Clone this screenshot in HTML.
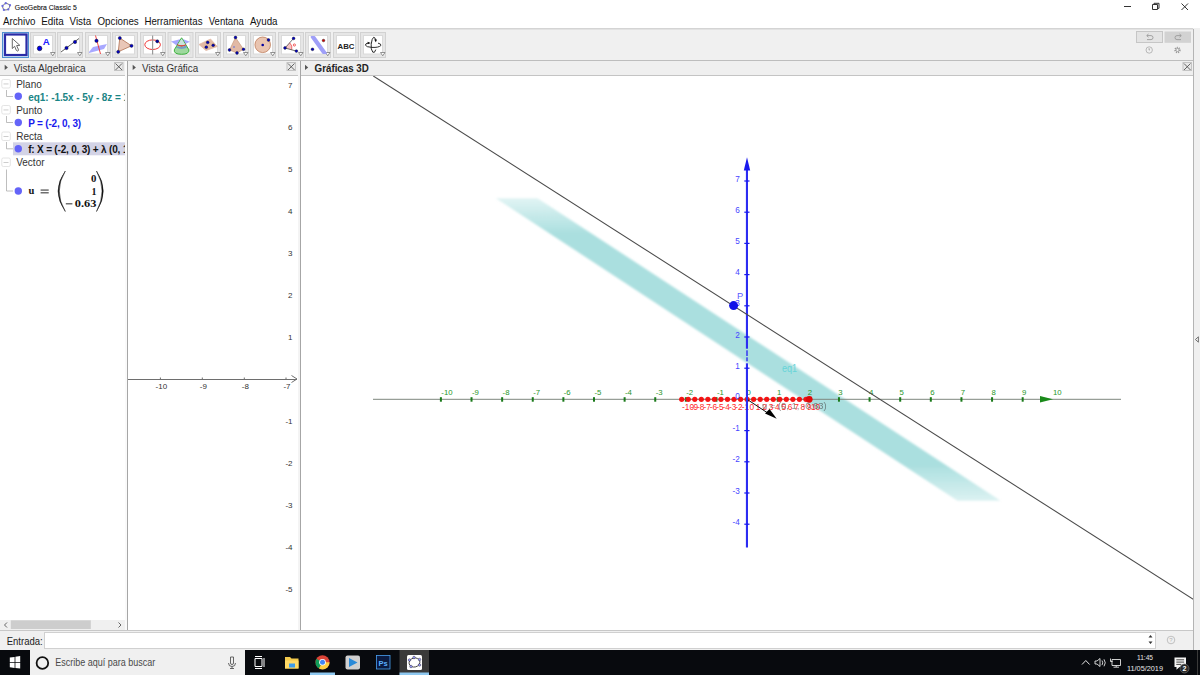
<!DOCTYPE html><html><head><meta charset="utf-8"><style>
html,body{margin:0;padding:0;width:1200px;height:675px;overflow:hidden;background:#fff;}
svg{display:block}
</style></head><body><svg width="1200" height="675" viewBox="0 0 1200 675">
<rect x="0" y="0" width="1200" height="28" fill="#ffffff" /><rect x="0" y="28" width="1200" height="33" fill="#f0f0f0" /><rect x="0" y="28" width="1200" height="1.5" fill="#d4d4d4" /><rect x="0" y="60" width="1193" height="1" fill="#bdbdbd" /><rect x="1193" y="28" width="7" height="622" fill="#f0f0f0" /><rect x="1193" y="29" width="1" height="621" fill="#b4b4b4" /><path d="M1198.4 336.8 L1195.4 339.5 L1198.4 342.2 Z" fill="none" stroke="#666" stroke-width="0.9"/><rect x="0" y="61" width="1193" height="14" fill="#efefef" /><rect x="0" y="75" width="125" height="1" fill="#c4c4c4" /><rect x="128" y="75" width="170" height="1" fill="#c4c4c4" /><rect x="301" y="75" width="892" height="1" fill="#c4c4c4" /><rect x="0" y="76" width="125" height="554" fill="#ffffff" /><rect x="125" y="61" width="2" height="569" fill="#fafafa" /><rect x="127" y="61" width="1" height="569" fill="#a6a6a6" /><rect x="128" y="76" width="1" height="554" fill="#f6f6f6" /><rect x="128" y="76" width="170" height="554" fill="#ffffff" /><rect x="298" y="61" width="2" height="569" fill="#f4f4f4" /><rect x="300" y="61" width="1" height="569" fill="#a6a6a6" /><rect x="301" y="76" width="1" height="554" fill="#f6f6f6" /><rect x="301" y="76" width="892" height="554" fill="#ffffff" /><rect x="0" y="630" width="1193" height="1" fill="#c8c8c8" /><rect x="0" y="631" width="1193" height="19" fill="#f0f0f0" /><rect x="44.5" y="632.5" width="1111" height="16" fill="#ffffff" stroke="#d0d0d0" stroke-width="1"/><rect x="0" y="650" width="1200" height="25" fill="#080a0e" /><path d="M5.75 3.25 Q8.2 3.6 10 5.25 Q9.6 7.6 8.25 9.4 Q6 10.2 3.9 9.9 Q2.6 8 2.5 6 Q3.8 4 5.75 3.25Z" fill="none" stroke="#666" stroke-width="0.9"/><circle cx="5.75" cy="3.25" r="1.15" fill="#6b6be0"/><circle cx="10" cy="5.25" r="1.15" fill="#6b6be0"/><circle cx="8.25" cy="9.4" r="1.15" fill="#6b6be0"/><circle cx="3.9" cy="9.9" r="1.15" fill="#6b6be0"/><circle cx="2.5" cy="6" r="1.15" fill="#6b6be0"/><text x="14.8" y="9.8" font-family='"Liberation Sans", sans-serif' font-size="8.1" fill="#111" font-weight="normal" text-anchor="start" textLength="62" lengthAdjust="spacingAndGlyphs" stroke="#111" stroke-width="0.12">GeoGebra Classic 5</text><rect x="1124" y="6" width="7" height="1" fill="#333" /><path d="M1152.5 4.5h5v5h-5z M1154 4.5v-1.2h5v5h-1.5" fill="none" stroke="#333" stroke-width="1"/><path d="M1181.5 3.5l6.5 6.5 M1188 3.5l-6.5 6.5" stroke="#333" stroke-width="1"/><text x="3" y="25.2" font-family='"Liberation Sans", sans-serif' font-size="10.5" fill="#111" font-weight="normal" text-anchor="start" textLength="32.5" lengthAdjust="spacingAndGlyphs" >Archivo</text><text x="41.25" y="25.2" font-family='"Liberation Sans", sans-serif' font-size="10.5" fill="#111" font-weight="normal" text-anchor="start" textLength="22.5" lengthAdjust="spacingAndGlyphs" >Edita</text><text x="69.5" y="25.2" font-family='"Liberation Sans", sans-serif' font-size="10.5" fill="#111" font-weight="normal" text-anchor="start" textLength="21.75" lengthAdjust="spacingAndGlyphs" >Vista</text><text x="97.5" y="25.2" font-family='"Liberation Sans", sans-serif' font-size="10.5" fill="#111" font-weight="normal" text-anchor="start" textLength="41.25" lengthAdjust="spacingAndGlyphs" >Opciones</text><text x="144.5" y="25.2" font-family='"Liberation Sans", sans-serif' font-size="10.5" fill="#111" font-weight="normal" text-anchor="start" textLength="58" lengthAdjust="spacingAndGlyphs" >Herramientas</text><text x="208.75" y="25.2" font-family='"Liberation Sans", sans-serif' font-size="10.5" fill="#111" font-weight="normal" text-anchor="start" textLength="35" lengthAdjust="spacingAndGlyphs" >Ventana</text><text x="250" y="25.2" font-family='"Liberation Sans", sans-serif' font-size="10.5" fill="#111" font-weight="normal" text-anchor="start" textLength="27.5" lengthAdjust="spacingAndGlyphs" >Ayuda</text><rect x="2.5" y="32.5" width="26" height="25" fill="#c9e1f7" stroke="#4f8fcf" stroke-width="1"/><rect x="5" y="34.5" width="21.5" height="20.5" fill="#ffffff" stroke="#2b2ba6" stroke-width="2.2"/><path d="M12.3 38.5 L12.3 48.5 L14.6 46.3 L16.3 50.3 Q17.3 51.6 18.2 50.8 Q18.8 50 18.2 49 L16.6 45.6 L19.8 45.3 Z" fill="#fff" stroke="#444" stroke-width="0.8" stroke-linejoin="round"/><rect x="30.5" y="32.5" width="25" height="25" fill="#e6e6e6" stroke="#d2d2d2" stroke-width="1"/><rect x="33.5" y="35.5" width="19" height="18.5" fill="#ffffff" stroke="#dadada" stroke-width="1"/><path d="M50.5 52.5h4.5l-2.25 3.3z" fill="#fff" stroke="#777" stroke-width="0.8"/><circle cx="39.6" cy="48.4" r="2.3" fill="#0000f0" stroke="#111" stroke-width="0.6"/><text x="42.8" y="44.9" font-family='"Liberation Sans", sans-serif' font-size="9.8" fill="#2020ff" font-weight="bold" text-anchor="start" textLength="7" lengthAdjust="spacingAndGlyphs" >A</text><rect x="57.5" y="32.5" width="25" height="25" fill="#e6e6e6" stroke="#d2d2d2" stroke-width="1"/><rect x="60.5" y="35.5" width="19" height="18.5" fill="#ffffff" stroke="#dadada" stroke-width="1"/><path d="M77.5 52.5h4.5l-2.25 3.3z" fill="#fff" stroke="#777" stroke-width="0.8"/><line x1="61" y1="52" x2="79" y2="38.5" stroke="#333" stroke-width="0.8" /><circle cx="66.5" cy="48" r="1.7" fill="#0000c0" stroke="#111" stroke-width="0.4"/><circle cx="75" cy="42" r="1.7" fill="#0000c0" stroke="#111" stroke-width="0.4"/><rect x="85.5" y="32.5" width="25" height="25" fill="#e6e6e6" stroke="#d2d2d2" stroke-width="1"/><rect x="88.5" y="35.5" width="19" height="18.5" fill="#ffffff" stroke="#dadada" stroke-width="1"/><path d="M105.5 52.5h4.5l-2.25 3.3z" fill="#fff" stroke="#777" stroke-width="0.8"/><path d="M89 52 L93 47 L107 44 L104 49 L89 53 Z" fill="#9999ff" opacity="0.85"/><line x1="95.5" y1="35.5" x2="100.5" y2="54" stroke="#ee3333" stroke-width="0.9" /><circle cx="96.5" cy="40.8" r="1.7" fill="#0000c0" stroke="#111" stroke-width="0.4"/><rect x="112.5" y="32.5" width="25" height="25" fill="#e6e6e6" stroke="#d2d2d2" stroke-width="1"/><rect x="115.5" y="35.5" width="19" height="18.5" fill="#ffffff" stroke="#dadada" stroke-width="1"/><path d="M119.8 38 L131.5 45.8 L118.2 51.8 Z" fill="#e9c7b8" stroke="#b07050" stroke-width="0.8"/><circle cx="119.8" cy="38" r="1.6" fill="#0000c0" stroke="#111" stroke-width="0.4"/><circle cx="131.5" cy="45.8" r="1.6" fill="#0000c0" stroke="#111" stroke-width="0.4"/><circle cx="118.2" cy="51.8" r="1.6" fill="#0000c0" stroke="#111" stroke-width="0.4"/><rect x="140.5" y="32.5" width="25" height="25" fill="#e6e6e6" stroke="#d2d2d2" stroke-width="1"/><rect x="143.5" y="35.5" width="19" height="18.5" fill="#ffffff" stroke="#dadada" stroke-width="1"/><path d="M160.5 52.5h4.5l-2.25 3.3z" fill="#fff" stroke="#777" stroke-width="0.8"/><ellipse cx="152.6" cy="44.7" rx="7.8" ry="4.8" fill="none" stroke="#ee2222" stroke-width="0.9"/><rect x="152" y="35.5" width="1.2" height="19" fill="#999" /><circle cx="157.3" cy="41.3" r="1.6" fill="#0000a0" stroke="#111" stroke-width="0.4"/><rect x="168.0" y="32.5" width="25" height="25" fill="#e6e6e6" stroke="#d2d2d2" stroke-width="1"/><rect x="171.0" y="35.5" width="19" height="18.5" fill="#ffffff" stroke="#dadada" stroke-width="1"/><path d="M171 41.5 L182 38.8 L190 41.8 L179 47 Z" fill="#8a8aff" opacity="0.75"/><path d="M181.6 37.8 L174.3 49.8 Q173.6 54.3 181.6 54.3 Q189.4 54.3 188.9 49.8 Z" fill="#9ed89e" stroke="#2eaa2e" stroke-width="0.9" stroke-linejoin="round"/><path d="M181.6 38.6 L177.5 45 Q181.6 47 185.7 45 Z" fill="#c8e4dc"/><path d="M175.8 47.5 L178 46.2 Q182 47.8 185.5 45.6 L187.4 47.2 Q182 50.5 175.8 47.5Z" fill="#5a78e0" opacity="0.6"/><path d="M177.2 44.6 Q181.6 47.2 185.9 44.6" fill="none" stroke="#e02020" stroke-width="1.1"/><rect x="195.5" y="32.5" width="25" height="25" fill="#e6e6e6" stroke="#d2d2d2" stroke-width="1"/><rect x="198.5" y="35.5" width="19" height="18.5" fill="#ffffff" stroke="#dadada" stroke-width="1"/><path d="M215.5 52.5h4.5l-2.25 3.3z" fill="#fff" stroke="#777" stroke-width="0.8"/><path d="M199 44.5 L210.5 39 L217.3 46.5 L206 50.5 Z" fill="#e2b9a5" stroke="#e2b9a5" stroke-width="0.8" stroke-linejoin="round"/><circle cx="207.7" cy="42.4" r="1.4" fill="#0000c0" stroke="#111" stroke-width="0.4"/><circle cx="206.3" cy="47.2" r="1.4" fill="#0000c0" stroke="#111" stroke-width="0.4"/><circle cx="213.2" cy="45.3" r="1.4" fill="#0000c0" stroke="#111" stroke-width="0.4"/><rect x="223.5" y="32.5" width="25" height="25" fill="#e6e6e6" stroke="#d2d2d2" stroke-width="1"/><rect x="226.5" y="35.5" width="19" height="18.5" fill="#ffffff" stroke="#dadada" stroke-width="1"/><path d="M243.5 52.5h4.5l-2.25 3.3z" fill="#fff" stroke="#777" stroke-width="0.8"/><path d="M235.5 37.5 L229.5 50 L237 53 L243.5 49.3 Z" fill="#e2b9a5" stroke="#c09070" stroke-width="0.6"/><circle cx="235.5" cy="37.5" r="1.4" fill="#0000c0" stroke="#111" stroke-width="0.4"/><circle cx="229.5" cy="50" r="1.4" fill="#0000c0" stroke="#111" stroke-width="0.4"/><circle cx="237" cy="53" r="1.4" fill="#0000c0" stroke="#111" stroke-width="0.4"/><circle cx="243.5" cy="49.3" r="1.4" fill="#0000c0" stroke="#111" stroke-width="0.4"/><circle cx="234" cy="47" r="1" fill="#8888cc"/><rect x="250.5" y="32.5" width="25" height="25" fill="#e6e6e6" stroke="#d2d2d2" stroke-width="1"/><rect x="253.5" y="35.5" width="19" height="18.5" fill="#ffffff" stroke="#dadada" stroke-width="1"/><path d="M270.5 52.5h4.5l-2.25 3.3z" fill="#fff" stroke="#777" stroke-width="0.8"/><circle cx="262.7" cy="44.8" r="7.8" fill="#e9c4b0" stroke="#b8704a" stroke-width="0.7"/><circle cx="262.7" cy="45" r="1.3" fill="#0000a0"/><circle cx="268.5" cy="40" r="1.4" fill="#0000c0" stroke="#111" stroke-width="0.4"/><rect x="278.5" y="32.5" width="25" height="25" fill="#e6e6e6" stroke="#d2d2d2" stroke-width="1"/><rect x="281.5" y="35.5" width="19" height="18.5" fill="#ffffff" stroke="#dadada" stroke-width="1"/><path d="M298.5 52.5h4.5l-2.25 3.3z" fill="#fff" stroke="#777" stroke-width="0.8"/><path d="M285 48 L289.7 42.8 A7 7 0 0 1 291.75 49.8 Z" fill="#f8c4c4"/><path d="M289.7 42.8 A7 7 0 0 1 291.75 49.8" fill="none" stroke="#ee4444" stroke-width="0.7"/><line x1="285" y1="48" x2="293.6" y2="38.4" stroke="#333" stroke-width="0.7" /><line x1="285" y1="48" x2="296.4" y2="51.1" stroke="#333" stroke-width="0.7" /><circle cx="294.4" cy="45" r="1.1" fill="none" stroke="#ee2222" stroke-width="0.7"/><circle cx="285" cy="48" r="1.4" fill="#0000c0" stroke="#111" stroke-width="0.4"/><circle cx="293.6" cy="38.4" r="1.4" fill="#0000c0" stroke="#111" stroke-width="0.4"/><circle cx="296.4" cy="51.1" r="1.4" fill="#0000c0" stroke="#111" stroke-width="0.4"/><rect x="305.5" y="32.5" width="25" height="25" fill="#e6e6e6" stroke="#d2d2d2" stroke-width="1"/><rect x="308.5" y="35.5" width="19" height="18.5" fill="#ffffff" stroke="#dadada" stroke-width="1"/><path d="M325.5 52.5h4.5l-2.25 3.3z" fill="#fff" stroke="#777" stroke-width="0.8"/><path d="M311.5 37 L314.5 37 L326 53 L323 53 Z" fill="#9f9ff8" stroke="#9f9ff8" stroke-width="1.8" stroke-linejoin="round"/><circle cx="323.5" cy="40.5" r="1.3" fill="#cc0000" stroke="#111" stroke-width="0.4"/><circle cx="312.5" cy="49.3" r="1.4" fill="#0000c0" stroke="#111" stroke-width="0.4"/><rect x="333.5" y="32.5" width="25" height="25" fill="#e6e6e6" stroke="#d2d2d2" stroke-width="1"/><rect x="336.5" y="35.5" width="19" height="18.5" fill="#ffffff" stroke="#dadada" stroke-width="1"/><text x="346" y="48.5" font-family='"Liberation Sans", sans-serif' font-size="7.8" fill="#222" font-weight="bold" text-anchor="middle" >ABC</text><rect x="360.5" y="32.5" width="25" height="25" fill="#e6e6e6" stroke="#d2d2d2" stroke-width="1"/><rect x="363.5" y="35.5" width="19" height="18.5" fill="#ffffff" stroke="#dadada" stroke-width="1"/><path d="M380.5 52.5h4.5l-2.25 3.3z" fill="#fff" stroke="#777" stroke-width="0.8"/><path d="M375.8 49.6 Q374.6 53.6 372.8 52.2 Q370.6 49.5 371.2 44.2 Q371.9 38.3 373.6 37.3 Q375.2 37 375.6 40.2" fill="none" stroke="#222" stroke-width="0.95"/><path d="M374.2 39.6 L377 39.6 L375.8 42.3Z" fill="#111"/><path d="M378 43.1 Q381.6 43.9 380.8 45.6 Q378.6 47.7 372 47.4 Q366.2 47.1 365.4 45.2 Q365 43.6 368.6 42.9" fill="none" stroke="#222" stroke-width="0.95"/><path d="M367.6 41.7 L370.8 42.9 L367.8 44.3Z" fill="#111"/><rect x="1136.5" y="31.5" width="26" height="11" fill="#e4e4e4" stroke="#c6c6c6" stroke-width="1"/><rect x="1164.5" y="31.5" width="26.5" height="11.3" fill="#d2d2d2" /><path d="M1147 35.6 h4 a2 2 0 0 1 0 4 h-4 M1148.5 34 l-1.8 1.6 l1.8 1.6" fill="none" stroke="#9a9a9a" stroke-width="0.9"/><path d="M1181 35.6 h-4 a2 2 0 0 0 0 4 h4 M1179.5 34 l1.8 1.6 l-1.8 1.6" fill="none" stroke="#9a9a9a" stroke-width="0.9"/><circle cx="1149.2" cy="50" r="3.2" fill="none" stroke="#aaa" stroke-width="0.8"/><path d="M1148.2 48.5 h2 l-1 2.4z" fill="#aaa"/><circle cx="1177.5" cy="50" r="2.4" fill="none" stroke="#999" stroke-width="1.6" stroke-dasharray="1 0.9"/><circle cx="1177.5" cy="50" r="1.6" fill="none" stroke="#999" stroke-width="0.8"/><path d="M4.7 64.8 L7.9 67.39999999999999 L4.7 70.0 Z" fill="#555"/><text x="13.7" y="72" font-family='"Liberation Sans", sans-serif' font-size="10" fill="#333" font-weight="normal" text-anchor="start" textLength="72" lengthAdjust="spacingAndGlyphs" >Vista Algebraica</text><rect x="114.5" y="62.5" width="8.5" height="8" fill="#e8e8e8" stroke="#c4c4c4" stroke-width="1"/><path d="M115.5 63.5 L122 70 M122 63.5 L115.5 70" stroke="#555" stroke-width="0.9"/><path d="M132.7 64.8 L135.89999999999998 67.39999999999999 L132.7 70.0 Z" fill="#555"/><text x="142" y="72" font-family='"Liberation Sans", sans-serif' font-size="10" fill="#333" font-weight="normal" text-anchor="start" textLength="56.2" lengthAdjust="spacingAndGlyphs" >Vista Gráfica</text><rect x="287.0" y="62.5" width="8.5" height="8" fill="#e8e8e8" stroke="#c4c4c4" stroke-width="1"/><path d="M288.0 63.5 L294.5 70 M294.5 63.5 L288.0 70" stroke="#555" stroke-width="0.9"/><path d="M305 64.8 L308.2 67.39999999999999 L305 70.0 Z" fill="#555"/><text x="314.6" y="72" font-family='"Liberation Sans", sans-serif' font-size="10" fill="#222" font-weight="bold" text-anchor="start" textLength="54.2" lengthAdjust="spacingAndGlyphs" >Gráficas 3D</text><rect x="1183.0" y="62.5" width="8.5" height="8" fill="#e8e8e8" stroke="#c4c4c4" stroke-width="1"/><path d="M1184.0 63.5 L1190.5 70 M1190.5 63.5 L1184.0 70" stroke="#555" stroke-width="0.9"/><rect x="13" y="142.3" width="112" height="13" fill="#d3d3e6" /><rect x="1.8" y="79.5" width="8.5" height="8.5" fill="#ffffff" rx="1.5" stroke="#e4e4e4" stroke-width="1"/><rect x="3.5" y="83.5" width="5" height="0.9" fill="#c8c8c8" /><text x="16.2" y="87.5" font-family='"Liberation Sans", sans-serif' font-size="10" fill="#333" font-weight="normal" text-anchor="start" >Plano</text><rect x="1.8" y="105.5" width="8.5" height="8.5" fill="#ffffff" rx="1.5" stroke="#e4e4e4" stroke-width="1"/><rect x="3.5" y="109.5" width="5" height="0.9" fill="#c8c8c8" /><text x="16.2" y="113.5" font-family='"Liberation Sans", sans-serif' font-size="10" fill="#333" font-weight="normal" text-anchor="start" >Punto</text><rect x="1.8" y="132.0" width="8.5" height="8.5" fill="#ffffff" rx="1.5" stroke="#e4e4e4" stroke-width="1"/><rect x="3.5" y="136.0" width="5" height="0.9" fill="#c8c8c8" /><text x="16.2" y="140.0" font-family='"Liberation Sans", sans-serif' font-size="10" fill="#333" font-weight="normal" text-anchor="start" >Recta</text><rect x="1.8" y="158.0" width="8.5" height="8.5" fill="#ffffff" rx="1.5" stroke="#e4e4e4" stroke-width="1"/><rect x="3.5" y="162.0" width="5" height="0.9" fill="#c8c8c8" /><text x="16.2" y="166.0" font-family='"Liberation Sans", sans-serif' font-size="10" fill="#333" font-weight="normal" text-anchor="start" >Vector</text><path d="M6.5 90 V96.5 H13" fill="none" stroke="#a8a8a8" stroke-width="0.75"/><circle cx="18.3" cy="96.2" r="3.7" fill="#6464f8"/><svg x="0" y="76" width="125" height="554" overflow="hidden"><text x="28.2" y="24.5" font-family='"Liberation Sans", sans-serif' font-size="10" fill="#1a8585" font-weight="bold" text-anchor="start" textLength="92.6" lengthAdjust="spacing" >eq1: -1.5x - 5y - 8z =</text><text x="123.5" y="24.5" font-family='"Liberation Sans", sans-serif' font-size="10" fill="#1a8080" font-weight="bold" text-anchor="start" >1</text><text x="28.2" y="76.6" font-family='"Liberation Sans", sans-serif' font-size="10" fill="#111" font-weight="bold" text-anchor="start" textLength="92.1" lengthAdjust="spacing" >f: X = (-2, 0, 3) + λ (0,</text><text x="123" y="76.6" font-family='"Liberation Sans", sans-serif' font-size="10" fill="#111" font-weight="bold" text-anchor="start" >1</text></svg><path d="M6.5 116 V122.5 H13" fill="none" stroke="#a8a8a8" stroke-width="0.75"/><circle cx="18.3" cy="122.5" r="3.7" fill="#6464f8"/><text x="28.2" y="126.5" font-family='"Liberation Sans", sans-serif' font-size="10" fill="#1a1aee" font-weight="bold" text-anchor="start" textLength="53" lengthAdjust="spacing" >P = (-2, 0, 3)</text><path d="M6.5 142 V148.8 H13" fill="none" stroke="#a8a8a8" stroke-width="0.75"/><circle cx="18.3" cy="148.8" r="3.7" fill="#6464f8"/><path d="M6.5 169.5 V191 H13" fill="none" stroke="#a8a8a8" stroke-width="0.75"/><circle cx="18.3" cy="191" r="3.7" fill="#6464f8"/><text x="28.5" y="194.3" font-family='"Liberation Serif", serif' font-size="10.5" fill="#111" font-weight="bold" text-anchor="start" >u</text><rect x="40.6" y="189.6" width="8.1" height="0.9" fill="#111" /><rect x="40.6" y="192.4" width="8.1" height="0.9" fill="#111" /><path d="M65.3 171 Q50.8 191 65.3 211.5 Q53.2 191 65.3 171Z" fill="#111" stroke="#111" stroke-width="0.5"/><path d="M96.5 171 Q110 191 96.5 211.5 Q107.6 191 96.5 171Z" fill="#111" stroke="#111" stroke-width="0.5"/><text x="96.4" y="181.9" font-family='"Liberation Serif", serif' font-size="10" fill="#111" font-weight="bold" text-anchor="end" textLength="5.4" lengthAdjust="spacingAndGlyphs" >0</text><text x="96.4" y="194.9" font-family='"Liberation Serif", serif' font-size="10" fill="#111" font-weight="bold" text-anchor="end" textLength="5" lengthAdjust="spacingAndGlyphs" >1</text><rect x="65.8" y="203.4" width="6.6" height="0.9" fill="#111" /><text x="74.8" y="207.3" font-family='"Liberation Serif", serif' font-size="10" fill="#111" font-weight="bold" text-anchor="start" textLength="21.6" lengthAdjust="spacingAndGlyphs" >0.63</text><rect x="0" y="620" width="125" height="10" fill="#f0f0f0" /><rect x="10.8" y="620.3" width="80" height="8.7" fill="#cdcdcd" /><path d="M7 622.5 L4.5 625 L7 627.5 M118.5 622.5 L121 625 L118.5 627.5" fill="none" stroke="#555" stroke-width="0.9"/><line x1="128" y1="379" x2="297" y2="379" stroke="#6e6e6e" stroke-width="1" shape-rendering="crispEdges"/><path d="M291.5 375.5 L297 379 L291.5 382.5" fill="none" stroke="#6e6e6e" stroke-width="1"/><line x1="160.4" y1="377.5" x2="160.4" y2="379" stroke="#6e6e6e" stroke-width="1" /><text x="161.4" y="389" font-family='"Liberation Sans", sans-serif' font-size="8" fill="#333" font-weight="normal" text-anchor="middle" >-10</text><line x1="202.3" y1="377.5" x2="202.3" y2="379" stroke="#6e6e6e" stroke-width="1" /><text x="203.3" y="389" font-family='"Liberation Sans", sans-serif' font-size="8" fill="#333" font-weight="normal" text-anchor="middle" >-9</text><line x1="244.3" y1="377.5" x2="244.3" y2="379" stroke="#6e6e6e" stroke-width="1" /><text x="245.3" y="389" font-family='"Liberation Sans", sans-serif' font-size="8" fill="#333" font-weight="normal" text-anchor="middle" >-8</text><line x1="286.0" y1="377.5" x2="286.0" y2="379" stroke="#6e6e6e" stroke-width="1" /><text x="287.0" y="389" font-family='"Liberation Sans", sans-serif' font-size="8" fill="#333" font-weight="normal" text-anchor="middle" >-7</text><text x="292.5" y="88" font-family='"Liberation Sans", sans-serif' font-size="8" fill="#333" font-weight="normal" text-anchor="end" >7</text><text x="292.5" y="130" font-family='"Liberation Sans", sans-serif' font-size="8" fill="#333" font-weight="normal" text-anchor="end" >6</text><text x="292.5" y="172" font-family='"Liberation Sans", sans-serif' font-size="8" fill="#333" font-weight="normal" text-anchor="end" >5</text><text x="292.5" y="214" font-family='"Liberation Sans", sans-serif' font-size="8" fill="#333" font-weight="normal" text-anchor="end" >4</text><text x="292.5" y="256" font-family='"Liberation Sans", sans-serif' font-size="8" fill="#333" font-weight="normal" text-anchor="end" >3</text><text x="292.5" y="298" font-family='"Liberation Sans", sans-serif' font-size="8" fill="#333" font-weight="normal" text-anchor="end" >2</text><text x="292.5" y="340" font-family='"Liberation Sans", sans-serif' font-size="8" fill="#333" font-weight="normal" text-anchor="end" >1</text><text x="292.5" y="424" font-family='"Liberation Sans", sans-serif' font-size="8" fill="#333" font-weight="normal" text-anchor="end" >-1</text><text x="292.5" y="466" font-family='"Liberation Sans", sans-serif' font-size="8" fill="#333" font-weight="normal" text-anchor="end" >-2</text><text x="292.5" y="508" font-family='"Liberation Sans", sans-serif' font-size="8" fill="#333" font-weight="normal" text-anchor="end" >-3</text><text x="292.5" y="550" font-family='"Liberation Sans", sans-serif' font-size="8" fill="#333" font-weight="normal" text-anchor="end" >-4</text><text x="292.5" y="592" font-family='"Liberation Sans", sans-serif' font-size="8" fill="#333" font-weight="normal" text-anchor="end" >-5</text><text x="6.7" y="644.6" font-family='"Liberation Sans", sans-serif' font-size="10.8" fill="#222" font-weight="normal" text-anchor="start" textLength="36" lengthAdjust="spacingAndGlyphs" >Entrada:</text><path d="M1148.5 637.5 l2 -2.5 l2 2.5z M1148.5 641.5 l2 2.5 l2 -2.5z" fill="#333"/><circle cx="1171" cy="640" r="3.8" fill="none" stroke="#b4b4b4" stroke-width="0.8"/><text x="1171" y="642.3" font-family='"Liberation Sans"' font-size="6" fill="#b4b4b4" text-anchor="middle">?</text><rect x="30" y="650" width="215" height="25" fill="#f0f0f0" /><path d="M9.8 657.6 L14.6 656.9 V662 H9.8Z M15.4 656.8 L20.2 656 V662 H15.4Z M9.8 662.8 H14.6 V667.9 L9.8 667.2Z M15.4 662.8 H20.2 V668.6 L15.4 667.9Z" fill="#fff"/><circle cx="42.4" cy="663" r="5.8" fill="none" stroke="#111" stroke-width="1.8"/><text x="55.3" y="666.2" font-family='"Liberation Sans", sans-serif' font-size="10" fill="#4a4a4a" font-weight="normal" text-anchor="start" textLength="100" lengthAdjust="spacingAndGlyphs" >Escribe aquí para buscar</text><path d="M230.5 657 h3 v6 a1.5 1.5 0 0 1 -3 0 z M228.5 663 a3.5 3.5 0 0 0 7 0 M232 666.5 v2 M230 668.5 h4" fill="none" stroke="#555" stroke-width="0.9"/><path d="M255 658.5 h7 v8 h-7z M255 656.5 h7 M255 668.5 h7 M264 658 v9" fill="none" stroke="#fff" stroke-width="1"/><path d="M285 657 h5 l1.5 1.5 h7 v10 h-13.5z" fill="#f2c94c"/><rect x="285" y="660.5" width="13.5" height="8" fill="#ffd966"/><rect x="289" y="663.5" width="6" height="4" fill="#3d9be9"/><circle cx="322.5" cy="662.3" r="7" fill="#db4437"/><path d="M322.5 662.3 L316.4 658.8 A7 7 0 0 0 319 668.4Z" fill="#0f9d58"/><path d="M322.5 662.3 L319 668.4 A7 7 0 0 0 329.5 662.3 Z" fill="#ffcd40"/><circle cx="322.5" cy="662.3" r="3.3" fill="#fff"/><circle cx="322.5" cy="662.3" r="2.5" fill="#4285f4"/><rect x="310" y="672.5" width="25" height="2.5" fill="#8ec8f0" /><rect x="345.5" y="655.5" width="14.5" height="14" rx="2" fill="#d0d0d0"/><path d="M349 658 L357.5 662.5 L349 667 Z" fill="#2a8ad8"/><rect x="376.5" y="655.5" width="13.5" height="13.5" fill="#0a1a40" stroke="#4aa0f0" stroke-width="0.8"/><text x="383.2" y="665.5" font-family='"Liberation Sans", sans-serif' font-size="7.5" fill="#5ab0ff" font-weight="bold" text-anchor="middle" >Ps</text><rect x="399.5" y="650" width="29.5" height="25" fill="#3a3a3a" /><rect x="399.5" y="672.5" width="29.5" height="2.5" fill="#8ec8f0" /><rect x="407" y="655" width="15" height="15" rx="1.5" fill="#fff"/><ellipse cx="414.5" cy="662.5" rx="5.5" ry="4.5" fill="none" stroke="#444" stroke-width="0.9" transform="rotate(-15 414.5 662.5)"/><circle cx="409.5" cy="660" r="1.3" fill="#9999ff" stroke="#222" stroke-width="0.4"/><circle cx="414" cy="657.5" r="1.3" fill="#9999ff" stroke="#222" stroke-width="0.4"/><circle cx="419.5" cy="659.5" r="1.3" fill="#9999ff" stroke="#222" stroke-width="0.4"/><circle cx="419.5" cy="665" r="1.3" fill="#9999ff" stroke="#222" stroke-width="0.4"/><circle cx="411" cy="666.5" r="1.3" fill="#9999ff" stroke="#222" stroke-width="0.4"/><path d="M1082 664.5 l3.8 -4 l3.8 4" fill="none" stroke="#fff" stroke-width="0.9"/><path d="M1095 661 h2 l3 -2.5 v8 l-3 -2.5 h-2z M1102 660.5 q1.5 2.3 0 4.6 M1104 659.3 q2.5 3.5 0 7" fill="none" stroke="#fff" stroke-width="0.8"/><path d="M1112 659.5 h8.5 v6 h-8.5z M1116.2 665.5 v1.5 M1113.5 667.2 h5.5 M1110.5 658.5 v3 h2" fill="none" stroke="#fff" stroke-width="0.8"/><text x="1137" y="659.6" font-family='"Liberation Sans", sans-serif' font-size="7.6" fill="#e8e8e8" font-weight="normal" text-anchor="start" textLength="16" lengthAdjust="spacingAndGlyphs" >11:45</text><text x="1127" y="671.3" font-family='"Liberation Sans", sans-serif' font-size="7.6" fill="#e8e8e8" font-weight="normal" text-anchor="start" textLength="36" lengthAdjust="spacingAndGlyphs" >11/05/2019</text><path d="M1174.5 657.5 h11.5 v9.5 h-6.5 l-3 2.8 v-2.8 h-2z" fill="#f4f4f4"/><path d="M1176.3 659.8 h7.8 M1176.3 662.1 h7.8 M1176.3 664.4 h5" stroke="#333" stroke-width="0.9"/><rect x="1197" y="650" width="1" height="25" fill="#3a3a3a" /><circle cx="1184.5" cy="668.5" r="4.5" fill="#2a2a2a" stroke="#777" stroke-width="0.6"/><text x="1184.5" y="671.3" font-family='"Liberation Sans", sans-serif' font-size="7" fill="#fff" font-weight="bold" text-anchor="middle" >2</text><svg x="301" y="76" width="892" height="554" overflow="hidden"><g transform="translate(-301,-76)"><defs><linearGradient id="bg" x1="0" y1="198" x2="0" y2="500.5" gradientUnits="userSpaceOnUse"><stop offset="0" stop-color="#aadfdf" stop-opacity="0.35"/><stop offset="0.12" stop-color="#aadfdf" stop-opacity="1"/><stop offset="0.88" stop-color="#aadfdf" stop-opacity="1"/><stop offset="1" stop-color="#aadfdf" stop-opacity="0.42"/></linearGradient><filter id="blur" x="-5%" y="-5%" width="110%" height="110%"><feGaussianBlur stdDeviation="0.85"/></filter></defs><path d="M495.8 198.2 L537.5 198.2 L1000.5 500.8 L957.5 500.8 Z" fill="url(#bg)" filter="url(#blur)"/><line x1="373" y1="399.3" x2="1121" y2="399.3" stroke="#7e867e" stroke-width="1" /><rect x="439.90000000000003" y="397.2" width="2" height="4.5" fill="#1a7a1a"/><text x="441.3" y="395.4" font-family='"Liberation Sans", sans-serif' font-size="7.8" fill="#2a962a" font-weight="normal" text-anchor="start" >-10</text><rect x="470.52000000000004" y="397.2" width="2" height="4.5" fill="#1a7a1a"/><text x="471.92" y="395.4" font-family='"Liberation Sans", sans-serif' font-size="7.8" fill="#2a962a" font-weight="normal" text-anchor="start" >-9</text><rect x="501.14" y="397.2" width="2" height="4.5" fill="#1a7a1a"/><text x="502.53999999999996" y="395.4" font-family='"Liberation Sans", sans-serif' font-size="7.8" fill="#2a962a" font-weight="normal" text-anchor="start" >-8</text><rect x="531.76" y="397.2" width="2" height="4.5" fill="#1a7a1a"/><text x="533.16" y="395.4" font-family='"Liberation Sans", sans-serif' font-size="7.8" fill="#2a962a" font-weight="normal" text-anchor="start" >-7</text><rect x="562.38" y="397.2" width="2" height="4.5" fill="#1a7a1a"/><text x="563.78" y="395.4" font-family='"Liberation Sans", sans-serif' font-size="7.8" fill="#2a962a" font-weight="normal" text-anchor="start" >-6</text><rect x="593.0" y="397.2" width="2" height="4.5" fill="#1a7a1a"/><text x="594.4" y="395.4" font-family='"Liberation Sans", sans-serif' font-size="7.8" fill="#2a962a" font-weight="normal" text-anchor="start" >-5</text><rect x="623.62" y="397.2" width="2" height="4.5" fill="#1a7a1a"/><text x="625.02" y="395.4" font-family='"Liberation Sans", sans-serif' font-size="7.8" fill="#2a962a" font-weight="normal" text-anchor="start" >-4</text><rect x="654.24" y="397.2" width="2" height="4.5" fill="#1a7a1a"/><text x="655.64" y="395.4" font-family='"Liberation Sans", sans-serif' font-size="7.8" fill="#2a962a" font-weight="normal" text-anchor="start" >-3</text><rect x="684.86" y="397.2" width="2" height="4.5" fill="#1a7a1a"/><text x="686.26" y="395.4" font-family='"Liberation Sans", sans-serif' font-size="7.8" fill="#2a962a" font-weight="normal" text-anchor="start" >-2</text><rect x="715.48" y="397.2" width="2" height="4.5" fill="#1a7a1a"/><text x="716.88" y="395.4" font-family='"Liberation Sans", sans-serif' font-size="7.8" fill="#2a962a" font-weight="normal" text-anchor="start" >-1</text><rect x="746.1" y="397.2" width="2" height="4.5" fill="#1a7a1a"/><text x="746.5" y="395.4" font-family='"Liberation Sans", sans-serif' font-size="7.8" fill="#2a962a" font-weight="normal" text-anchor="start" >0</text><rect x="776.72" y="397.2" width="2" height="4.5" fill="#1a7a1a"/><text x="777.12" y="395.4" font-family='"Liberation Sans", sans-serif' font-size="7.8" fill="#2a962a" font-weight="normal" text-anchor="start" >1</text><rect x="807.34" y="397.2" width="2" height="4.5" fill="#1a7a1a"/><text x="807.74" y="395.4" font-family='"Liberation Sans", sans-serif' font-size="7.8" fill="#2a962a" font-weight="normal" text-anchor="start" >2</text><rect x="837.96" y="397.2" width="2" height="4.5" fill="#1a7a1a"/><text x="838.36" y="395.4" font-family='"Liberation Sans", sans-serif' font-size="7.8" fill="#2a962a" font-weight="normal" text-anchor="start" >3</text><rect x="868.58" y="397.2" width="2" height="4.5" fill="#1a7a1a"/><text x="868.98" y="395.4" font-family='"Liberation Sans", sans-serif' font-size="7.8" fill="#2a962a" font-weight="normal" text-anchor="start" >4</text><rect x="899.2" y="397.2" width="2" height="4.5" fill="#1a7a1a"/><text x="899.6" y="395.4" font-family='"Liberation Sans", sans-serif' font-size="7.8" fill="#2a962a" font-weight="normal" text-anchor="start" >5</text><rect x="929.82" y="397.2" width="2" height="4.5" fill="#1a7a1a"/><text x="930.22" y="395.4" font-family='"Liberation Sans", sans-serif' font-size="7.8" fill="#2a962a" font-weight="normal" text-anchor="start" >6</text><rect x="960.44" y="397.2" width="2" height="4.5" fill="#1a7a1a"/><text x="960.84" y="395.4" font-family='"Liberation Sans", sans-serif' font-size="7.8" fill="#2a962a" font-weight="normal" text-anchor="start" >7</text><rect x="991.0600000000001" y="397.2" width="2" height="4.5" fill="#1a7a1a"/><text x="991.46" y="395.4" font-family='"Liberation Sans", sans-serif' font-size="7.8" fill="#2a962a" font-weight="normal" text-anchor="start" >8</text><rect x="1021.68" y="397.2" width="2" height="4.5" fill="#1a7a1a"/><text x="1022.0799999999999" y="395.4" font-family='"Liberation Sans", sans-serif' font-size="7.8" fill="#2a962a" font-weight="normal" text-anchor="start" >9</text><text x="1053" y="395.3" font-family='"Liberation Sans", sans-serif' font-size="7.8" fill="#2a962a" font-weight="normal" text-anchor="start" >10</text><path d="M1040 396 L1053 399.3 L1040 402.6 Z" fill="#1a8a1a"/><line x1="681" y1="399.3" x2="812" y2="399.3" stroke="#777" stroke-width="0.6" /><circle cx="681.7" cy="399.3" r="2.6" fill="#f50a0a" opacity="0.95"/><circle cx="688.24" cy="399.3" r="2.6" fill="#f50a0a" opacity="0.95"/><circle cx="694.7800000000001" cy="399.3" r="2.6" fill="#f50a0a" opacity="0.95"/><circle cx="701.32" cy="399.3" r="2.6" fill="#f50a0a" opacity="0.95"/><circle cx="707.86" cy="399.3" r="2.6" fill="#f50a0a" opacity="0.95"/><circle cx="714.4000000000001" cy="399.3" r="2.6" fill="#f50a0a" opacity="0.95"/><circle cx="720.94" cy="399.3" r="2.6" fill="#f50a0a" opacity="0.95"/><circle cx="727.48" cy="399.3" r="2.6" fill="#f50a0a" opacity="0.95"/><circle cx="734.0200000000001" cy="399.3" r="2.6" fill="#f50a0a" opacity="0.95"/><circle cx="740.5600000000001" cy="399.3" r="2.6" fill="#f50a0a" opacity="0.95"/><circle cx="747.1" cy="399.3" r="2.6" fill="#f50a0a" opacity="0.95"/><circle cx="753.6400000000001" cy="399.3" r="2.6" fill="#f50a0a" opacity="0.95"/><circle cx="760.1800000000001" cy="399.3" r="2.6" fill="#f50a0a" opacity="0.95"/><circle cx="766.72" cy="399.3" r="2.6" fill="#f50a0a" opacity="0.95"/><circle cx="773.26" cy="399.3" r="2.6" fill="#f50a0a" opacity="0.95"/><circle cx="779.8000000000001" cy="399.3" r="2.6" fill="#f50a0a" opacity="0.95"/><circle cx="786.34" cy="399.3" r="2.6" fill="#f50a0a" opacity="0.95"/><circle cx="792.8800000000001" cy="399.3" r="2.6" fill="#f50a0a" opacity="0.95"/><circle cx="799.4200000000001" cy="399.3" r="2.6" fill="#f50a0a" opacity="0.95"/><circle cx="805.96" cy="399.3" r="2.6" fill="#f50a0a" opacity="0.95"/><circle cx="809.2" cy="399.3" r="3.4" fill="#e00808"/><text x="688.0" y="410.3" font-family='"Liberation Sans", sans-serif' font-size="8.3" fill="#ff2a2a" font-weight="normal" text-anchor="middle" >-10</text><text x="694.38" y="410.3" font-family='"Liberation Sans", sans-serif' font-size="8.3" fill="#ff2a2a" font-weight="normal" text-anchor="middle" >-9</text><text x="700.76" y="410.3" font-family='"Liberation Sans", sans-serif' font-size="8.3" fill="#ff2a2a" font-weight="normal" text-anchor="middle" >-8</text><text x="707.14" y="410.3" font-family='"Liberation Sans", sans-serif' font-size="8.3" fill="#ff2a2a" font-weight="normal" text-anchor="middle" >-7</text><text x="713.52" y="410.3" font-family='"Liberation Sans", sans-serif' font-size="8.3" fill="#ff2a2a" font-weight="normal" text-anchor="middle" >-6</text><text x="719.9" y="410.3" font-family='"Liberation Sans", sans-serif' font-size="8.3" fill="#ff2a2a" font-weight="normal" text-anchor="middle" >-5</text><text x="726.28" y="410.3" font-family='"Liberation Sans", sans-serif' font-size="8.3" fill="#ff2a2a" font-weight="normal" text-anchor="middle" >-4</text><text x="732.66" y="410.3" font-family='"Liberation Sans", sans-serif' font-size="8.3" fill="#ff2a2a" font-weight="normal" text-anchor="middle" >-3</text><text x="739.04" y="410.3" font-family='"Liberation Sans", sans-serif' font-size="8.3" fill="#ff2a2a" font-weight="normal" text-anchor="middle" >-2</text><text x="745.42" y="410.3" font-family='"Liberation Sans", sans-serif' font-size="8.3" fill="#ff2a2a" font-weight="normal" text-anchor="middle" >-1</text><text x="751.8" y="410.3" font-family='"Liberation Sans", sans-serif' font-size="8.3" fill="#ff2a2a" font-weight="normal" text-anchor="middle" >0</text><text x="758.18" y="410.3" font-family='"Liberation Sans", sans-serif' font-size="8.3" fill="#ff2a2a" font-weight="normal" text-anchor="middle" >1</text><text x="764.56" y="410.3" font-family='"Liberation Sans", sans-serif' font-size="8.3" fill="#ff2a2a" font-weight="normal" text-anchor="middle" >2</text><text x="770.94" y="410.3" font-family='"Liberation Sans", sans-serif' font-size="8.3" fill="#ff2a2a" font-weight="normal" text-anchor="middle" >3</text><text x="777.3199999999999" y="410.3" font-family='"Liberation Sans", sans-serif' font-size="8.3" fill="#ff2a2a" font-weight="normal" text-anchor="middle" >4</text><text x="783.7" y="410.3" font-family='"Liberation Sans", sans-serif' font-size="8.3" fill="#ff2a2a" font-weight="normal" text-anchor="middle" >5</text><text x="790.08" y="410.3" font-family='"Liberation Sans", sans-serif' font-size="8.3" fill="#ff2a2a" font-weight="normal" text-anchor="middle" >6</text><text x="796.46" y="410.3" font-family='"Liberation Sans", sans-serif' font-size="8.3" fill="#ff2a2a" font-weight="normal" text-anchor="middle" >7</text><text x="802.84" y="410.3" font-family='"Liberation Sans", sans-serif' font-size="8.3" fill="#ff2a2a" font-weight="normal" text-anchor="middle" >8</text><text x="809.22" y="410.3" font-family='"Liberation Sans", sans-serif' font-size="8.3" fill="#ff2a2a" font-weight="normal" text-anchor="middle" >9</text><text x="815.6" y="410.3" font-family='"Liberation Sans", sans-serif' font-size="8.3" fill="#ff2a2a" font-weight="normal" text-anchor="middle" >10</text><text x="762" y="409.3" font-family='"Liberation Sans", sans-serif' font-size="9.5" fill="#484848" font-weight="normal" text-anchor="start" textLength="64.7" lengthAdjust="spacingAndGlyphs" opacity="0.62">u = (0, 1, -0.63)</text><line x1="747" y1="399.3" x2="770" y2="414.5" stroke="#111" stroke-width="1" /><path d="M776.7 418.8 L765 413.5 L769.5 409 Z" fill="#000"/><rect x="745.9" y="165" width="2.1" height="183.7" fill="#2c2cf2" /><rect x="746.3" y="350.3" width="1.4" height="5.7" fill="#2c2cf2" /><rect x="746.3" y="357.3" width="1.4" height="4" fill="#2c2cf2" /><rect x="745.9" y="363.3" width="2.1" height="184.2" fill="#2c2cf2" /><path d="M743.8 170.5 L747 157.3 L750.2 170.5 Z" fill="#1a1aee"/><rect x="744.3" y="180.4" width="5.2" height="1.2" fill="#1a1aee" /><text x="739.8" y="181.5" font-family='"Liberation Sans", sans-serif' font-size="8.2" fill="#4646ff" font-weight="normal" text-anchor="end" >7</text><rect x="744.3" y="211.60000000000002" width="5.2" height="1.2" fill="#1a1aee" /><text x="739.8" y="212.70000000000002" font-family='"Liberation Sans", sans-serif' font-size="8.2" fill="#4646ff" font-weight="normal" text-anchor="end" >6</text><rect x="744.3" y="242.8" width="5.2" height="1.2" fill="#1a1aee" /><text x="739.8" y="243.9" font-family='"Liberation Sans", sans-serif' font-size="8.2" fill="#4646ff" font-weight="normal" text-anchor="end" >5</text><rect x="744.3" y="274.0" width="5.2" height="1.2" fill="#1a1aee" /><text x="739.8" y="275.1" font-family='"Liberation Sans", sans-serif' font-size="8.2" fill="#4646ff" font-weight="normal" text-anchor="end" >4</text><rect x="744.3" y="305.20000000000005" width="5.2" height="1.2" fill="#1a1aee" /><text x="739.8" y="306.30000000000007" font-family='"Liberation Sans", sans-serif' font-size="8.2" fill="#4646ff" font-weight="normal" text-anchor="end" >3</text><rect x="744.3" y="336.40000000000003" width="5.2" height="1.2" fill="#1a1aee" /><text x="739.8" y="337.50000000000006" font-family='"Liberation Sans", sans-serif' font-size="8.2" fill="#4646ff" font-weight="normal" text-anchor="end" >2</text><rect x="744.3" y="367.6" width="5.2" height="1.2" fill="#1a1aee" /><text x="739.8" y="368.70000000000005" font-family='"Liberation Sans", sans-serif' font-size="8.2" fill="#4646ff" font-weight="normal" text-anchor="end" >1</text><rect x="744.3" y="430.0" width="5.2" height="1.2" fill="#1a1aee" /><text x="739.8" y="431.1" font-family='"Liberation Sans", sans-serif' font-size="8.2" fill="#4646ff" font-weight="normal" text-anchor="end" >-1</text><rect x="744.3" y="461.2" width="5.2" height="1.2" fill="#1a1aee" /><text x="739.8" y="462.3" font-family='"Liberation Sans", sans-serif' font-size="8.2" fill="#4646ff" font-weight="normal" text-anchor="end" >-2</text><rect x="744.3" y="492.4" width="5.2" height="1.2" fill="#1a1aee" /><text x="739.8" y="493.5" font-family='"Liberation Sans", sans-serif' font-size="8.2" fill="#4646ff" font-weight="normal" text-anchor="end" >-3</text><rect x="744.3" y="523.6" width="5.2" height="1.2" fill="#1a1aee" /><text x="739.8" y="524.7" font-family='"Liberation Sans", sans-serif' font-size="8.2" fill="#4646ff" font-weight="normal" text-anchor="end" >-4</text><text x="739.8" y="399" font-family='"Liberation Sans", sans-serif' font-size="8.2" fill="#4646ff" font-weight="normal" text-anchor="end" >0</text><line x1="373.3" y1="76" x2="1193.3" y2="599.2" stroke="#4a4a4a" stroke-width="1.05" /><circle cx="733.6" cy="305.6" r="4.5" fill="#1010e8"/><text x="737" y="299.2" font-family='"Liberation Sans", sans-serif' font-size="9.3" fill="#5a5aff" font-weight="normal" text-anchor="start" >P</text><text x="782" y="372.3" font-family='"Liberation Sans", sans-serif' font-size="10" fill="#66d4d8" font-weight="normal" text-anchor="start" textLength="15" lengthAdjust="spacingAndGlyphs" >eq1</text></g></svg>
</svg></body></html>
